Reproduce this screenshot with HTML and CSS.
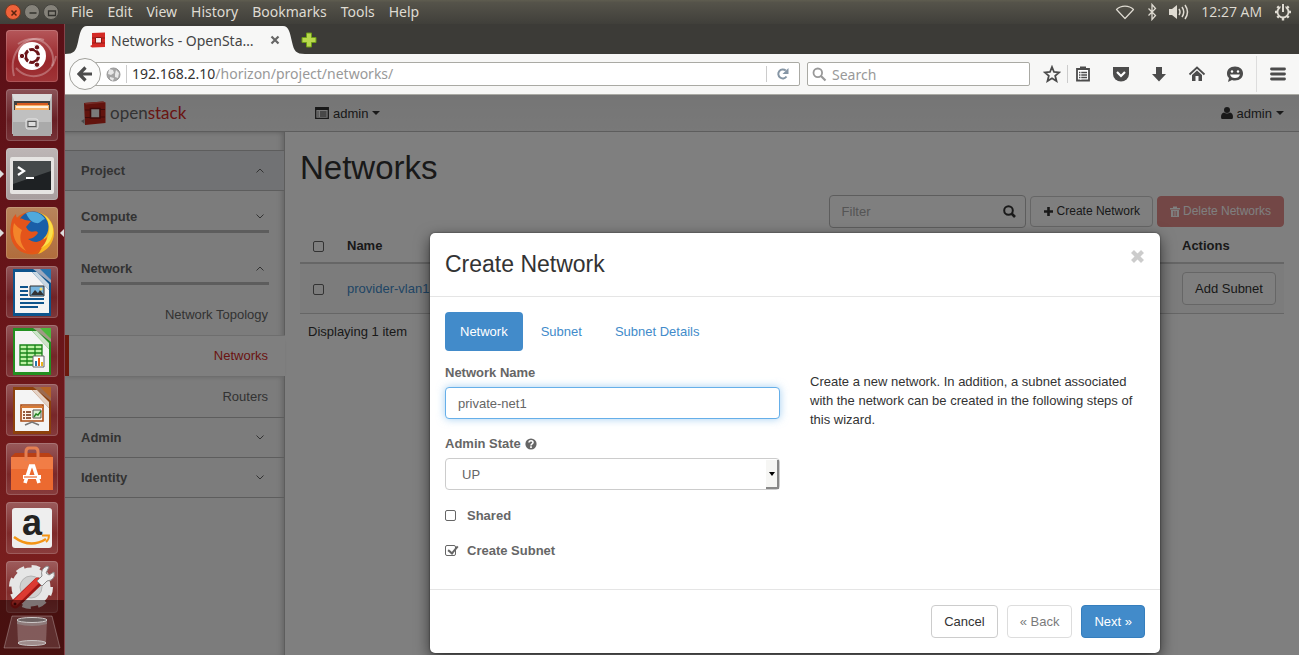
FILE: index.html
```html
<!DOCTYPE html>
<html lang="en">
<head>
<meta charset="utf-8">
<title>Networks - OpenStack Dashboard</title>
<link rel="stylesheet" href="styles.css">
</head>
<body class="desktop">

<header class="menubar">
  <div class="window-buttons">
    <button class="wbtn wbtn-close" aria-label="Close"><svg width="16" height="16" viewBox="0 0 16 16"><path d="M5.500 5.500l5 5m0-5l-5 5" stroke="#5b2410" stroke-width="1.500"/></svg></button>
    <button class="wbtn" aria-label="Minimize"><svg width="16" height="16" viewBox="0 0 16 16"><path d="M4.500 8h7" stroke="#33322e" stroke-width="1.500"/></svg></button>
    <button class="wbtn" aria-label="Maximize"><svg width="16" height="16" viewBox="0 0 16 16"><path d="M4.500 6h7v4.500h-7z" fill="none" stroke="#33322e" stroke-width="1.300"/></svg></button>
  </div>
  <nav class="menus">
    <button>File</button><button>Edit</button><button>View</button><button>History</button><button>Bookmarks</button><button>Tools</button><button>Help</button>
  </nav>
  <div class="indicators">
    <svg width="20" height="16" viewBox="0 0 20 16"><path d="M1.500 5.500C6 1 14 1 18.500 5.500L10 14.500z" fill="none" stroke="#dfdbd2" stroke-width="1.200" stroke-linejoin="round"/></svg>
    <svg width="10" height="18" viewBox="0 0 10 18"><path d="M1.500 5.500l7 7-3.500 4V1.500l3.500 4-7 7" fill="none" stroke="#dfdbd2" stroke-width="1.300"/></svg>
    <svg width="20" height="18" viewBox="0 0 20 18"><path d="M0 6h3l5-4v14l-5-4H0z" fill="#dfdbd2"/><path d="M10 6q2 3 0 6M13 4q3.500 5 0 10M16 2q5 7 0 14" fill="none" stroke="#dfdbd2" stroke-width="1.500"/></svg>
    <span class="clock">12:27 AM</span>
    <svg width="18" height="18" viewBox="0 0 18 18"><circle cx="9" cy="9" r="5.500" fill="none" stroke="#dfdbd2" stroke-width="1.800"/><g stroke="#dfdbd2" stroke-width="2.400"><path d="M9 15v2.500M1 9h2.500M14.500 9H17M3.300 3.300l2 2M14.700 3.300l-2 2M3.300 14.700l2-2M14.700 14.700l-2-2"/></g><path d="M9 1v8" stroke="#4b4942" stroke-width="5"/><path d="M9 1v8" stroke="#dfdbd2" stroke-width="2"/></svg>
  </div>
</header>

<div class="workspace">
<aside class="launcher">
  <ul class="tiles">
    <li class="tile tile-dash"><svg viewBox="0 0 52 52"><g fill="none" stroke="#fff" stroke-opacity=".28" stroke-width="2"><path d="M8 46C2 22 20 4 38 10"/><path d="M12 14C32 0 52 18 46 36"/><path d="M50 26C46 48 22 52 10 38"/></g><circle cx="26" cy="26" r="14" fill="#fff"/><circle cx="26" cy="26" r="6.500" fill="none" stroke="#6b1418" stroke-width="3.200"/><path d="M26 26L38 26M26 26l-6-10.400M26 26l-6 10.400" stroke="#fff" stroke-width="1.500"/><g fill="#6b1418" stroke="#fff"><circle cx="16" cy="26" r="2.700"/><circle cx="31" cy="17.300" r="2.700"/><circle cx="31" cy="34.700" r="2.700"/></g></svg></li>
    <li class="tile"><svg viewBox="0 0 52 52"><path d="M6 5h40v40H6z" fill="#b5b5b5"/><path d="M6 5h40l-2 7H8z" fill="#dcdcdc"/><path d="M8 12h36v11H8z" fill="#41403f"/><path d="M11 14h31v9H11z" fill="#d75b20"/><path d="M9 16h34v7H9z" fill="#f7b36b"/><path d="M10 17h32v2H10z" fill="#fff1de"/><path d="M7 21h38v26H7z" fill="#aaa"/><path d="M7 21h38v12H7z" fill="#c0c0c0"/><rect x="20" y="30" width="12" height="10" rx="2" fill="#b5b5b5" stroke="#e8e8e8"/><rect x="22" y="32.500" width="8" height="5" fill="#ddd" stroke="#555"/></svg></li>
    <li class="tile tile-terminal"><svg viewBox="0 0 52 52"><rect x="4" y="9" width="44" height="37" rx="2" fill="#e6e4e2"/><rect x="7" y="13" width="38" height="29" fill="#1e2123"/><path d="M7 13h38v10L7 36z" fill="#45494a"/><path d="M12 19l6 4-6 4" fill="none" stroke="#fff" stroke-width="2.200"/><path d="M20 30h8" stroke="#fff" stroke-width="2"/></svg></li>
    <li class="tile tile-firefox"><svg viewBox="0 0 52 52"><circle cx="26" cy="26" r="21.500" fill="#e25a17"/><path d="M31 5c10 2 17 10 17 21 0 10-7 18-16 21 8-9 8-26-1-42z" fill="#f9b822"/><circle cx="27" cy="20" r="15.500" fill="#1a5fa8"/><path d="M20 6c8-3 15 0 19 6-4 1-5 5-9 4-5-1-8-5-10-10z" fill="#4fa9dc"/><path d="M38 8c8 7 7 25-4 33 8-2 13-9 13-18 0-6-4-12-9-15z" fill="#fbe04a"/><path d="M6 13c1-3 3-5 4-6 0 3 1 4 2 5 3-1 5 0 7 1l6 1-5 6 2 3c4 4 8-1 10 3-2 3-6 6-10 6 7 5 14 3 19-2-1 9-10 16-19 16C9 46 1 30 6 13z" fill="#e4541b"/><path d="M8 16c-3 12 1 22 12 28-6-8-7-14-4-21-3-2-6-4-8-7z" fill="#f3852a"/></svg></li>
    <li class="tile"><svg viewBox="0 0 52 52"><path d="M7 3h38v47H7z" fill="#0d548c"/><path d="M27 3h18v14z" fill="#9fa9bc"/><path d="M34 3h11v11z" fill="#2a75ae"/><path d="M9 6h17l17 18v23H9z" fill="#f4f4f4"/><path d="M26 6l17 18V18L31 6z" fill="#cad8e2"/><path d="M14 21h8M14 25h8M14 29h8M14 33h24M14 37h24M14 41h18" stroke="#0d548c" stroke-width="2"/><path d="M24 20h14v10H24z" fill="#78b6df" stroke="#333"/><path d="M25 29l4-5 3 3 2-3 4 5z" fill="#333"/><circle cx="35" cy="23" r="1.500" fill="#f8df6d"/></svg></li>
    <li class="tile"><svg viewBox="0 0 52 52"><path d="M7 3h38v47H7z" fill="#239020"/><path d="M27 3h18v14z" fill="#a09a85"/><path d="M34 3h11v11z" fill="#4db83c"/><path d="M9 6h17l17 18v23H9z" fill="#f4f4f4"/><path d="M26 6l17 18V18L31 6z" fill="#cde3c9"/><path d="M14 20h22v20H14z" fill="#bdf2a4"/><path d="M14 20h22v20H14zM14 24h22M14 28h22M14 32h22M14 36h22M21 20v20M29 20v20" fill="none" stroke="#188318" stroke-width="1.300"/><path d="M27 31h11v11H27z" fill="#fff" stroke="#666"/><path d="M29 41v-5h2v5z" fill="#2a75ae"/><path d="M32 41v-8h2v8z" fill="#e35c19"/><path d="M35 41v-4h2v4z" fill="#eab51d"/></svg></li>
    <li class="tile"><svg viewBox="0 0 52 52"><path d="M7 3h38v47H7z" fill="#8d410c"/><path d="M27 3h18v14z" fill="#9c6b50"/><path d="M34 3h11v11z" fill="#b46426"/><path d="M9 6h17l17 18v23H9z" fill="#f4f4f4"/><path d="M26 6l17 18V18L31 6z" fill="#e4d2c5"/><path d="M15 21h22v16H15z" fill="#fff6ec" stroke="#a84a12" stroke-width="1.600"/><path d="M15 23h22" stroke="#d77a35" stroke-width="2"/><path d="M17 28h8M17 31h8M17 34h8" stroke="#732b09" stroke-width="1.700" stroke-dasharray="2 1 6"/><path d="M27 26h8v8h-8z" fill="#d9efd1" stroke="#555"/><path d="M28 33l2-3 2 1 3-4" fill="none" stroke="#238423" stroke-width="1.400"/><path d="M19 41l7-3 7 3" fill="none" stroke="#777" stroke-width="1.600"/></svg></li>
    <li class="tile"><svg viewBox="0 0 52 52"><path d="M5 14h42v33H5z" fill="#ec6a30"/><path d="M5 14l4-4h34l4 4z" fill="#ba4014"/><path d="M5 14h42v12H5z" fill="#f17d46"/><path d="M20 18V9q0-4 3-4h6q3 0 3 4v9" fill="none" stroke="#e57f52" stroke-width="3"/><path d="M19 40l5.500-17h3L33 40" fill="none" stroke="#fff" stroke-width="3.600"/><path d="M17 34h18" stroke="#fff" stroke-width="4"/><path d="M18 34h13" stroke="#ec6a30" stroke-width="1.200"/></svg></li>
    <li class="tile"><svg viewBox="0 0 52 52"><rect x="6" y="6" width="40" height="40" rx="3" fill="#eee"/><text x="26" y="33" text-anchor="middle" class="store-letter">a</text><path d="M8 35q16 12 32 2" fill="none" stroke="#f39415" stroke-width="2.600"/><path d="M36 33.500h7q0 4-3 6.500" fill="none" stroke="#f39415" stroke-width="1.800"/></svg></li>
    <li class="tile"><svg viewBox="0 0 52 52"><circle cx="25" cy="26" r="15" fill="none" stroke="#e6e6e6" stroke-width="9"/><circle cx="25" cy="26" r="19" fill="none" stroke="#e6e6e6" stroke-width="6" stroke-dasharray="8 6.920"/><circle cx="25" cy="26" r="11" fill="#d0d0d0" stroke="#b5b5b5"/><path d="M9 43L32 21" stroke="#9d1715" stroke-width="9" stroke-linecap="round"/><path d="M9 42L31 20" stroke="#dc3a32" stroke-width="6" stroke-linecap="round"/><circle cx="9" cy="43" r="1.500" fill="#4b0a0a"/><path d="M31 20l5-5q-2-7 5-10l2 1-3 6 3 2 5-3q2 8-7 9l-5 5z" fill="#eee" stroke="#8b8b8b"/></svg></li>
  </ul>
  <svg class="trash" viewBox="0 0 58 34"><path d="M9 1h40l8 32H1z" fill="#fff" fill-opacity=".13" stroke="#fff" stroke-opacity=".28"/><path d="M14 5l1 23q14 5 28 0l1-23z" fill="#fff" fill-opacity=".22"/><path d="M14 5v4q15 4 30 0V5" fill="#999" fill-opacity=".5"/><ellipse cx="29" cy="5" rx="15" ry="2.500" fill="#6d6262" stroke="#cfcaca"/><ellipse cx="29" cy="28" rx="14" ry="2.500" fill="#bbb" fill-opacity=".5" stroke="#c9c3c3"/></svg>
  <div class="launcher-fold"></div>
  <i class="pip pip-terminal"></i><i class="pip pip-firefox"></i><i class="pip pip-focus"></i>
</aside>

<section class="browser">
  <div class="tabstrip">
    <svg class="tab-edge" width="22" height="28" viewBox="0 0 22 28"><path d="M0 28C9 28 11 25 13 16S16 0 22 0v28z" fill="#f7f7f6"/></svg>
    <div class="tab">
      <svg width="16" height="16" viewBox="0 0 16 16"><path d="M2 1l13-.5v14.500l-13 .5L0 14l2-1z" fill="#d42a25"/><path d="M2 6h3M12 6h3M2 11h3M12 11h3" stroke="#8e1512" stroke-width=".8"/><path d="M5.500 5.500h6v5.500h-6z" fill="#f7e8e7" stroke="#8e1512"/></svg>
      <span class="tab-title">Networks - OpenSta…</span>
      <button class="bare" aria-label="Close tab"><svg width="10" height="10" viewBox="0 0 10 10"><path d="M1.500 1.500l7 7m0-7l-7 7" stroke="#666" stroke-width="2.200"/></svg></button>
    </div>
    <svg class="tab-edge" width="22" height="28" viewBox="0 0 22 28"><path d="M22 28C13 28 11 25 9 16S6 0 0 0v28z" fill="#f7f7f6"/></svg>
    <button class="bare" aria-label="New tab"><svg width="16" height="16" viewBox="0 0 16 16"><path d="M5.500 1h5v4.500H15v5h-4.500V15h-5v-4.500H1v-5h4.500z" fill="#b8d84c" stroke="#6d9c17"/></svg></button>
  </div>

  <div class="toolbar">
    <div class="address">
      <button class="back" aria-label="Back"><svg width="16" height="16" viewBox="0 0 16 16"><path d="M8.500 1.500L2 8l6.500 6.500M2.500 8H15" fill="none" stroke="#4c4c4c" stroke-width="3.200"/></svg></button>
      <svg width="15" height="15" viewBox="0 0 15 15"><circle cx="7.500" cy="7.500" r="6.500" fill="#a5a5a5" stroke="#999"/><path d="M3 2l4 1 1 3-3 2-3-1zM10 3l3 3-1 5-3-1V7zM4 10l4 1-1 3-3-2z" fill="#e8e8e8"/></svg>
      <div class="url"><span class="host">192.168.2.10</span>/horizon/project/networks/</div>
      <button class="bare reload" aria-label="Reload"><svg width="14" height="14" viewBox="0 0 14 14"><path d="M10.500 9.500A4.500 4.500 0 1 1 9.800 3.600" fill="none" stroke="#8696a5" stroke-width="2"/><path d="M12.500 1v6h-6z" fill="#8696a5"/></svg></button>
    </div>
    <label class="search"><svg width="15" height="15" viewBox="0 0 15 15"><circle cx="5.800" cy="5.800" r="4.300" fill="none" stroke="#999" stroke-width="1.800"/><path d="M9 9l4.500 4.500" stroke="#999" stroke-width="2.200"/></svg><input type="text" placeholder="Search" aria-label="Search the web"></label>
    <div class="tools">
      <button class="bare" aria-label="Bookmark"><svg width="18" height="18" viewBox="0 0 18 18"><path d="M9 2l2 5 5.200.4-4 3.400 1.300 5.200L9 13.200 4.500 16l1.300-5.200-4-3.400L7 7z" fill="none" stroke="#4c4c4c" stroke-width="1.800"/></svg></button>
      <button class="bare ruled" aria-label="Bookmarks list"><svg width="16" height="18" viewBox="0 0 16 18"><path d="M2 4h12v11.500H2z" fill="#fff" stroke="#4c4c4c" stroke-width="1.800"/><path d="M5 1.500h6V4H5z" fill="#4c4c4c"/><path d="M4 7.500h8M4 10h8M4 12.500h8" stroke="#4c4c4c" stroke-width="1.300"/><path d="M5.800 6v9" stroke="#fff" stroke-width=".8"/></svg></button>
      <button class="bare" aria-label="Pocket"><svg width="18" height="18" viewBox="0 0 18 18"><path d="M1 2h16v7a8 7.500 0 0 1-16 0z" fill="#4c4c4c"/><path d="M5 7l4 4 4-4" fill="none" stroke="#fff" stroke-width="2.200"/></svg></button>
      <button class="bare" aria-label="Downloads"><svg width="18" height="18" viewBox="0 0 18 18"><path d="M6 2h6v7h4l-7 7.500L2 9h4z" fill="#4c4c4c"/></svg></button>
      <button class="bare" aria-label="Home"><svg width="18" height="18" viewBox="0 0 18 18"><path d="M1.500 9.500L9 2.500l7.500 7" fill="none" stroke="#4c4c4c" stroke-width="1.800"/><path d="M4 10l5-4.500 5 4.500V16h-3.500v-5h-3v5H4z" fill="#4c4c4c"/></svg></button>
      <button class="bare" aria-label="Hello"><svg width="18" height="18" viewBox="0 0 18 18"><path d="M9 1.500c5 0 8 3 8 7s-3 7-8 7c-1 0-2 0-3-.5L2 17l1-4C1.500 12 1 10 1 8.500c0-4 3-7 8-7z" fill="#4c4c4c"/><circle cx="6" cy="6.500" r="1.200" fill="#fff"/><circle cx="12" cy="6.500" r="1.200" fill="#fff"/><path d="M4 9.500h10q-1 3.500-5 3.500t-5-3.500z" fill="#fff"/></svg></button>
    </div>
    <button class="bare appmenu" aria-label="Open menu"><svg width="16" height="14" viewBox="0 0 16 14"><path d="M1.500 2h13M1.500 7h13M1.500 12h13" stroke="#4c4c4c" stroke-width="2.800" stroke-linecap="round"/></svg></button>
  </div>

  <div class="page">
    <header class="navbar">
      <a class="brand" href="#"><svg width="25" height="24" viewBox="0 0 25 24"><path d="M3 2l19-1.500 2.500 1V22L4 24z" fill="#c4261b"/><path d="M3 2l19-1.500 2.500 1L5 3.500z" fill="#ea5a4e"/><path d="M0 20l3.500-2v5z" fill="#999"/><path d="M4 9h5M19 8.500h5M4 16.500h5M19 16h5" stroke="#7d1512"/><path d="M9.500 7.500h9.500v9.500H9.500z" fill="#f4f4f4" stroke="#7d1512" stroke-width="1.600"/></svg><span class="brand-name">open<span class="brand-accent">stack</span></span></a>
      <button class="navbtn"><svg width="14" height="12" viewBox="0 0 14 12"><path d="M.7.700h12.600v10.600H.7z" fill="none" stroke="#333" stroke-width="1.300"/><path d="M.7 1h12.600v2H.7z" fill="#333"/><path d="M2.500 5h1M2.500 7h1M2.500 9h1M5 5h6.500M5 7h6.500M5 9h6.500" stroke="#333"/></svg>admin<i class="caret"></i></button>
      <button class="navbtn user"><svg width="12" height="12" viewBox="0 0 12 12"><circle cx="6" cy="3" r="3" fill="#333"/><path d="M1 12q-1 0-1-2 0-4 3-4.500 3 2 6 0 3 .5 3 4.500 0 2-1 2z" fill="#333"/></svg>admin<i class="caret"></i></button>
    </header>

    <div class="columns">
      <nav class="sidebar">
        <a class="group group-open" href="#">Project<svg class="chev" viewBox="0 0 8 5"><path d="M.5 4.500L4 1l3.500 3.500"/></svg></a>
        <a class="panel-head" href="#">Compute<svg class="chev" viewBox="0 0 8 5"><path d="M.5.500L4 4 7.500.500"/></svg></a>
        <a class="panel-head panel-next" href="#">Network<svg class="chev" viewBox="0 0 8 5"><path d="M.5 4.500L4 1l3.500 3.500"/></svg></a>
        <div class="links">
          <a href="#">Network Topology</a>
          <a class="current" href="#">Networks</a>
          <a href="#">Routers</a>
        </div>
        <a class="group" href="#">Admin<svg class="chev" viewBox="0 0 8 5"><path d="M.5.500L4 4 7.500.500"/></svg></a>
        <a class="group" href="#">Identity<svg class="chev" viewBox="0 0 8 5"><path d="M.5.500L4 4 7.500.500"/></svg></a>
      </nav>

      <main class="content">
        <h1>Networks</h1>
        <div class="actions">
          <label class="filter"><input type="text" placeholder="Filter" aria-label="Filter"><svg width="13" height="13" viewBox="0 0 13 13"><circle cx="5.500" cy="5.500" r="4.300" fill="none" stroke="#333" stroke-width="2"/><path d="M8.500 8.500l3.500 3.500" stroke="#333" stroke-width="2.600"/></svg></label>
          <button class="btn btn-small"><svg width="11" height="11" viewBox="0 0 11 11"><path d="M5.500 1v9M1 5.500h9" stroke="#333" stroke-width="2.600"/></svg>Create Network</button>
          <button class="btn btn-small btn-danger" disabled><svg width="10" height="11" viewBox="0 0 10 11"><path d="M0 2h3V.5h4V2h3v1.500H0zM1 4h8v7H1z" fill="#fff"/><path d="M3.500 5v5M5 5v5M6.500 5v5" stroke="#d9534f" stroke-width=".7"/></svg>Delete Networks</button>
        </div>
        <table class="grid">
          <thead><tr><th class="c-check"><input type="checkbox" aria-label="Select all"></th><th>Name</th><th class="c-actions">Actions</th></tr></thead>
          <tbody><tr><td class="c-check"><input type="checkbox" aria-label="Select provider-vlan1"></td><td><a href="#">provider-vlan1</a></td><td class="c-actions"><button class="btn">Add Subnet</button></td></tr></tbody>
        </table>
        <p class="count">Displaying 1 item</p>
      </main>
    </div>

    <div class="backdrop">
      <form class="modal" role="dialog" aria-labelledby="dlg-title">
        <header class="modal-head">
          <h2 id="dlg-title">Create Network</h2>
          <button type="button" class="bare" aria-label="Close dialog"><svg width="15" height="15" viewBox="0 0 15 15"><path d="M2.500 2.500l10 10m0-10l-10 10" stroke="#ccc" stroke-width="4.200"/></svg></button>
        </header>
        <div class="modal-body">
          <nav class="pills"><a class="on" href="#">Network</a><a href="#">Subnet</a><a href="#">Subnet Details</a></nav>
          <div class="halves">
            <div class="fields">
              <label for="net-name">Network Name</label>
              <input class="control focused" id="net-name" type="text" value="private-net1">
              <label for="state" class="gap-top">Admin State <svg width="12" height="12" viewBox="0 0 12 12"><circle cx="6" cy="6" r="5.600" fill="#666"/><path d="M4 4.600c0-2.600 4.200-2.400 4 0C8 6 6 5.800 6 7.500" fill="none" stroke="#fff" stroke-width="1.600"/><path d="M6 8.300v1.600" stroke="#fff" stroke-width="1.700"/></svg></label>
              <div class="pick"><select class="control" id="state"><option>UP</option></select><i class="pick-arrow"></i></div>
              <label class="tick"><input type="checkbox">Shared</label>
              <label class="tick"><input type="checkbox" checked>Create Subnet</label>
            </div>
            <p class="help">Create a new network. In addition, a subnet associated with the network can be created in the following steps of this wizard.</p>
          </div>
        </div>
        <footer class="modal-foot">
          <button type="button" class="btn">Cancel</button>
          <button type="button" class="btn" disabled>« Back</button>
          <button type="button" class="btn btn-primary">Next »</button>
        </footer>
      </form>
    </div>
  </div>
</section>
</div>
</body>
</html>
```

FILE: styles.css
```css
* { box-sizing: border-box; }
button, input, select { font: inherit; color: inherit; margin: 0; }
svg { display: block; flex: none; }
a { color: inherit; text-decoration: none; }

.desktop {
  margin: 0;
  height: 100vh;
  display: flex;
  flex-direction: column;
  overflow: hidden;
  font-family: "Noto Sans", "Open Sans", sans-serif;
  font-size: 14px;
}

/* Top menu bar */
.menubar {
  flex: none;
  height: 24px;
  display: flex;
  align-items: center;
  padding: 0 7px 0 5px;
  color: #dfdbd2;
  background: linear-gradient(#5f5d50, #55534a 10%, #403f3a);
}
.window-buttons { display: flex; gap: 3px; }
.wbtn {
  width: 16px; height: 16px; padding: 0;
  border: 1px solid #45443f; border-radius: 50%;
  background: #85827a;
  display: grid; place-items: center;
}
.wbtn-close { background: #f0623a; border-color: #7a3a22; }
.menus { display: flex; gap: 14px; margin-left: 12px; flex: 1; }
.menus button { border: 0; padding: 0; background: none; line-height: 22px; }
.indicators { display: flex; align-items: center; gap: 12px; }
.clock { font-family: "Open Sans", sans-serif; line-height: 22px; }
.bare { border: 0; padding: 0; background: none; }

.workspace { flex: 1; display: flex; min-height: 0; }

/* Launcher */
.launcher {
  position: relative;
  flex: none;
  width: 65px;
  padding: 6px 6px 0;
  background: linear-gradient(#5b1017, #681519 45%, #7e2220);
  border-right: 1px solid #84434a;
  overflow: hidden;
}
.tiles { list-style: none; margin: 0; padding: 0; display: flex; flex-direction: column; gap: 7px; }
.tile {
  width: 52px; height: 52px;
  border-radius: 4px;
  background: linear-gradient(rgba(255,255,255,.28), rgba(255,255,255,.06) 60%, rgba(255,255,255,.14));
  box-shadow: inset 0 0 0 1px rgba(255,255,255,.16);
}
.tile svg { overflow: visible; }
.tile-dash { background: linear-gradient(#b5575a, #98262a 60%, #a03538); }
.tile-terminal { background: linear-gradient(#bdb6b6, #a89e9e); }
.tile-firefox { background: linear-gradient(#b9855c, #b06c3c); }
.store-letter { font: bold 36px "Liberation Sans", Arial, sans-serif; fill: #222; }
.trash { position: relative; z-index: 1; width: 58px; height: 34px; margin: 2px 0 0 -3px; }
.launcher-fold { position: absolute; left: 0; right: 0; bottom: 0; height: 55px; background: rgba(20,0,0,.5); }
.pip { position: absolute; border: 4px solid transparent; }
.pip-terminal { left: 0; top: 146px; border-left-color: #ddd; }
.pip-firefox { left: 0; top: 205px; border-left-color: #ddd; }
.pip-focus { right: 0; top: 205px; border-right-color: #ddd; }

/* Browser window */
.browser { flex: 1; min-width: 0; display: flex; flex-direction: column; }
.tabstrip {
  flex: none;
  height: 30px;
  display: flex;
  align-items: flex-end;
  background: #3c3b37;
}
.tab { height: 28px; width: 196px; display: flex; align-items: center; gap: 5px; padding: 0 3px; background: #f7f7f6; color: #444; }
.tab-title { flex: 1; white-space: nowrap; }
.tabstrip > button { align-self: center; margin-bottom: -2px; }
.tab-edge + button { margin-left: -4px; }
.toolbar {
  flex: none;
  height: 41px;
  display: flex;
  align-items: center;
  gap: 7px;
  padding-left: 4px;
  background: #f7f7f6;
  border-bottom: 1px solid #aaaaa4;
}
.address, .search {
  height: 24px;
  display: flex;
  align-items: center;
  background: #fff;
  border: 1px solid #aaaaa4;
  border-radius: 2px;
  color: #999;
}
.address { flex: 1; gap: 5px; margin-left: 8px; }
.back {
  width: 32px; height: 32px; margin-left: -9px; padding: 0;
  border: 1px solid #a0a09b; border-radius: 50%;
  background: #fbfbfa;
  display: grid; place-items: center;
}
.url { flex: 1; padding-left: 5px; border-left: 1px solid #ccc; line-height: 18px; }
.host { color: #333; }
.reload { width: 33px; height: 16px; border-left: 1px solid #ccc; display: grid; place-items: center; }
.search { width: 223px; padding: 0 4px; gap: 5px; }
.search input { flex: 1; min-width: 0; border: 0; padding: 0; background: none; outline: 0; }
.search input::placeholder { color: #999; }
.tools { display: flex; align-items: center; gap: 20px; margin: 0 5px 0 6px; }
.ruled { margin-left: -14px; padding-left: 7px; margin-right: 1px; border-left: 1px solid #ccc; }
.appmenu { height: 36px; padding: 0 13px; border-left: 1px solid #ddd; }

/* Dashboard page */
.page {
  position: relative;
  flex: 1;
  min-height: 0;
  overflow: hidden;
  display: flex;
  flex-direction: column;
  background: #fff;
  color: #333;
  font: 13px/19px "Liberation Sans", Arial, sans-serif;
}
.navbar {
  flex: none;
  height: 37px;
  display: flex;
  align-items: center;
  padding: 0 15px 0 16px;
  background: linear-gradient(#ebebeb, #f2f2f2);
  border-bottom: 1px solid #bbb;
}
.brand { width: 234px; display: flex; align-items: center; gap: 4px; color: #666; }
.brand-name { font: 17px/24px Lato, sans-serif; }
.brand-accent { color: #d42a25; }
.navbtn { display: flex; align-items: center; gap: 4px; border: 0; padding: 0; background: none; }
.user { margin-left: auto; }
.caret { border: 4px solid transparent; border-top-color: #333; border-bottom: 0; }
.columns { flex: 1; display: flex; }
.sidebar {
  width: 220px;
  padding-top: 18px;
  background: #f8f8f8;
  color: #666;
  border-right: 1px solid #bbb;
  box-shadow: inset -6px 0 6px -5px #bbb, inset 0 5px 5px -5px #bbb;
}
.chev { width: 8px; height: 5px; margin-right: 5px; fill: none; stroke: #666; }
.group {
  display: flex; align-items: center; justify-content: space-between;
  height: 40px;
  padding: 0 15px 0 16px;
  font-weight: bold;
  border-bottom: 1px solid #bbb;
}
.group-open { height: 41px; background: #e3e5e9; border-top: 1px solid #bbb; }
.panel-head {
  display: flex; justify-content: space-between; align-items: center;
  margin: 0 15px 0 16px;
  padding: 16px 0 4px;
  font-weight: bold;
  border-bottom: 3px solid #bbb;
}
.panel-next { padding-top: 26px; }
.links { padding-top: 9px; border-bottom: 1px solid #bbb; text-align: right; }
.links a { display: block; padding: 0 16px; line-height: 41px; }
.links .current {
  position: relative;
  margin-right: -1px;
  padding: 0 17px;
  background: #fff;
  border-left: 4px solid #d9301a;
  box-shadow: inset 0 1px 0 #ddd, 0 3px 4px -2px #ccc;
  color: #d42a25;
}
.content { flex: 1; min-width: 0; padding: 17px 15px 0; }
.content h1 { margin: 0 0 8px; font-size: 33px; line-height: 38px; font-weight: normal; }
.actions { display: flex; justify-content: flex-end; align-items: center; gap: 4px; }
.filter {
  width: 197px; height: 33px; padding: 0 9px 0 12px;
  display: flex; align-items: center;
  border: 1px solid #bbb; border-radius: 4px;
}
.filter input { flex: 1; min-width: 0; border: 0; padding: 0; background: none; outline: 0; }
.filter input::placeholder { color: #aaa; }
.btn {
  display: inline-flex; align-items: center; gap: 3px;
  height: 33px; padding: 0 12px;
  background: #fff; color: #333;
  border: 1px solid #ccc; border-radius: 4px;
  white-space: nowrap;
}
.btn:disabled { opacity: .65; }
.btn-small { height: 31px; font-size: 12px; }
.btn-danger { background: #d9534f; border-color: #d9534f; color: #fff; }
.btn-primary { background: #428bca; border-color: #357ebd; color: #fff; }
.grid { width: 100%; border-collapse: collapse; }
.grid th { height: 35px; padding: 0; text-align: left; border-bottom: 2px solid #ccc; }
.grid td { padding: 8px 0; border-bottom: 1px solid #ccc; background: #f9f9f9; }
.grid a { color: #428bca; }
.grid .c-check { width: 47px; padding-left: 13px; }
.grid .c-check input { margin-top: 2px; }
.grid .c-actions { width: 102px; }
.count { margin: 8px; }
input[type="checkbox"] {
  appearance: none;
  display: block;
  width: 11px; height: 11px;
  border: 1px solid #666; border-radius: 2px;
}
input[type="checkbox"]:checked::after {
  content: "";
  display: block;
  width: 4px; height: 8px;
  margin: -2px 0 0 4px;
  border: solid #666; border-width: 0 2px 2px 0;
  rotate: 40deg;
}

/* Dialog */
.backdrop { position: absolute; inset: 0; display: flex; justify-content: flex-end; align-items: flex-start; padding: 138px 139px 0 0; background: rgba(0,0,0,.5); }
.modal { width: 730px; background: #fff; border-radius: 5px; box-shadow: 0 5px 15px rgba(0,0,0,.6), 0 0 2px rgba(0,0,0,.6); }
.modal-head { display: flex; justify-content: space-between; padding: 16px 15px 17px; border-bottom: 1px solid #e5e5e5; }
.modal-head h2 { margin: 0; font-size: 23px; line-height: 30px; font-weight: normal; }
.modal-head button { align-self: flex-start; }
.modal-body { padding: 15px 15px 29px; }
.pills { display: flex; gap: 3px; color: #428bca; }
.pills a { padding: 10px 15px; border-radius: 4px; }
.pills .on { background: #428bca; color: #fff; }
.halves { display: grid; grid-template-columns: 1fr 1fr; gap: 30px; padding-top: 12px; }
.fields { display: flex; flex-direction: column; color: #666; }
.fields label { display: flex; align-items: center; gap: 4px; margin-bottom: 5px; font-weight: bold; }
.fields .gap-top { margin-top: 15px; }
.control {
  width: 100%; height: 32px; padding: 0 12px;
  background: #fff; color: #666;
  border: 1px solid #ccc; border-radius: 4px;
  outline: 0;
}
.focused { border-color: #66afe9; box-shadow: 0 0 8px rgba(102,175,233,.6); }
.pick { position: relative; }
.pick select { appearance: none; padding-left: 16px; display: block; }
.pick-arrow {
  position: absolute; right: 1px; top: 2px; bottom: 1px;
  width: 13px;
  display: grid; place-items: center;
  background: #f6f6f4;
  border-right: 2px solid #888; border-bottom: 2px solid #888;
  pointer-events: none;
}
.pick-arrow::after { content: ""; border: 3px solid transparent; border-top: 4px solid #000; border-bottom: 0; }
.fields .tick { gap: 11px; margin: 0; padding-top: 16px; }
.help { margin: 9px 0 0; }
.modal-foot { display: flex; justify-content: flex-end; gap: 9px; padding: 15px; border-top: 1px solid #e5e5e5; }
```
